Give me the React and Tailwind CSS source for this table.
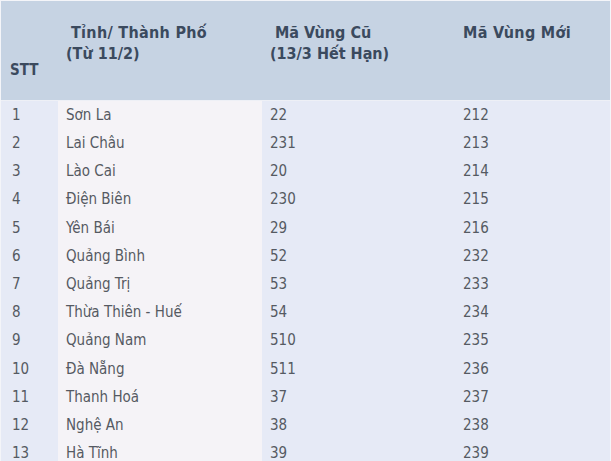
import React from "react";

const rows = [
  ["1", "Sơn La", "22", "212"],
  ["2", "Lai Châu", "231", "213"],
  ["3", "Lào Cai", "20", "214"],
  ["4", "Điện Biên", "230", "215"],
  ["5", "Yên Bái", "29", "216"],
  ["6", "Quảng Bình", "52", "232"],
  ["7", "Quảng Trị", "53", "233"],
  ["8", "Thừa Thiên - Huế", "54", "234"],
  ["9", "Quảng Nam", "510", "235"],
  ["10", "Đà Nẵng", "511", "236"],
  ["11", "Thanh Hoá", "37", "237"],
  ["12", "Nghệ An", "38", "238"],
  ["13", "Hà Tĩnh", "39", "239"],
];

export default function App() {
  return (
    <div
      className="w-[611px] h-[461px] overflow-hidden bg-[#eef0f6] border-t border-l border-r border-[#f4f5f9]"
      style={{ fontFamily: 'Tahoma, "DejaVu Sans Condensed", "DejaVu Sans", sans-serif' }}
    >
      <div className="flex h-[99px] bg-[#c6d3e3] text-[#3b4a5e] font-bold text-[16px] leading-[21px]">
        <div className="w-[57px] flex items-end pl-[9px] pb-[19px] text-[15px]">STT</div>
        <div className="w-[204px] pl-[8px] pt-[21px]">
          <div className="pl-[5px] tracking-[0.3px]">Tỉnh/ Thành Phố</div>
          <div>(Từ 11/2)</div>
        </div>
        <div className="w-[193px] pl-[8px] pt-[21px]">
          <div className="pl-[5px]">Mã Vùng Cũ</div>
          <div>(13/3 Hết Hạn)</div>
        </div>
        <div className="flex-1 pl-[8px] pt-[21px] tracking-[0.3px]">Mã Vùng Mới</div>
      </div>
      <div className="text-[#555a62] text-[15px] pt-[1px]">
        {rows.map((r) => (
          <div key={r[0]} className="flex h-[28.2px] items-center">
            <div className="w-[57px] h-full flex items-center pl-[11px] bg-[#e6eaf6]">{r[0]}</div>
            <div className="w-[204px] h-full flex items-center pl-[8px] bg-[#f5f3f7]">{r[1]}</div>
            <div className="w-[193px] h-full flex items-center pl-[8px] bg-[#e6eaf6]">{r[2]}</div>
            <div className="flex-1 h-full flex items-center pl-[8px] bg-[#e6eaf6]">{r[3]}</div>
          </div>
        ))}
      </div>
    </div>
  );
}
